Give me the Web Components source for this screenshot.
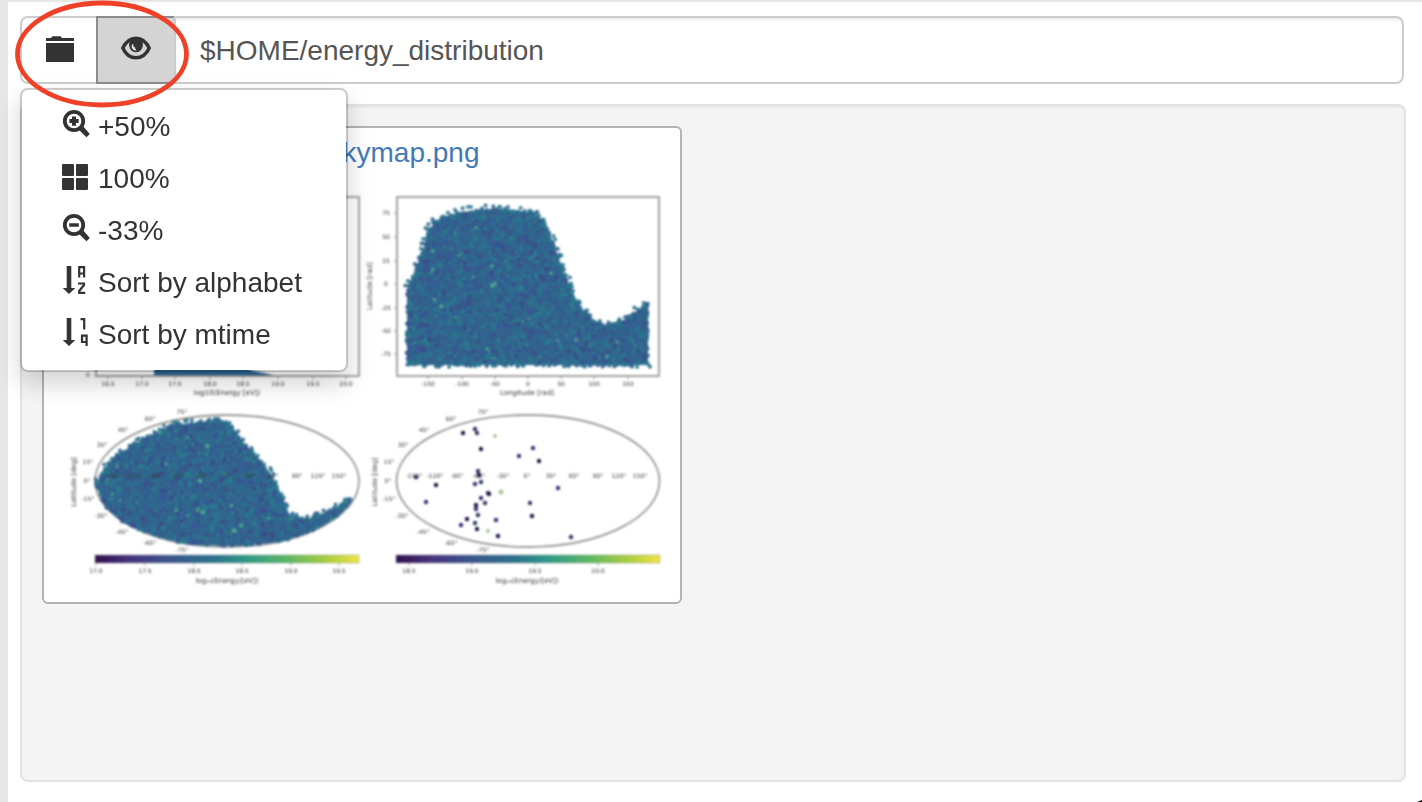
<!DOCTYPE html>
<html lang="en">
<head>
<meta charset="utf-8">
<title>File browser</title>
<style>
  body { margin: 0; font: 28px/40px "Liberation Sans", Arial, sans-serif; color: #333; }
</style>
</head>
<body>
<browser-app>
  <path-bar slot="bar" value="$HOME/energy_distribution">
    <tool-button slot="tools" label="Open folder" icon="folder"></tool-button>
    <tool-button slot="tools" label="View options" icon="eye" active></tool-button>
    <view-menu slot="menu">
      <menu-entry icon="zoomin">+50%</menu-entry>
      <menu-entry icon="grid">100%</menu-entry>
      <menu-entry icon="zoomout">-33%</menu-entry>
      <menu-entry icon="alpha">Sort by alphabet</menu-entry>
      <menu-entry icon="order">Sort by mtime</menu-entry>
    </view-menu>
    <focus-ring slot="mark"></focus-ring>
  </path-bar>
  <preview-card name="event_skymap.png"><sky-figure></sky-figure></preview-card>
</browser-app>

<script>
const ICONS = {
  folder: '<path d="M0 4h5l1.500-1.700h8l1.500 1.700h12v3H0zM0 9h28v19H0z"/>',
  eye: '<path d="M.8 14C3.500 8.500 7.500 4.200 14 4.200S24.500 8.500 27.200 14C24.500 20 20.500 23.800 14 23.800S3.500 20 .8 14z" fill="none" stroke="currentColor" stroke-width="3.400"/><path d="M8 6.500C5.600 12.500 8.500 18.200 14 18.200S22.400 12.500 20 6.500L17 4h-6z"/><path d="M11 10c-2.600 3 0 6.600 3.200 6.200-1.200-1-1.400-1.700-1.200-2.600C11.300 13.400 11 12 11 10z" fill="#e4e4e4" stroke="#e4e4e4" stroke-width=".6"/>',
  zoomin: '<circle cx="12" cy="11" r="9.200" fill="none" stroke="currentColor" stroke-width="3.800"/><path d="M16.500 19.500l4-4 7.300 8.400-3.300 3.300zM10 6.500h4v2.600h2.600v4H14v2.600h-4v-2.600H7.400v-4H10z"/>',
  zoomout: '<circle cx="12" cy="11" r="9.200" fill="none" stroke="currentColor" stroke-width="3.800"/><path d="M16.500 19.500l4-4 7.300 8.400-3.300 3.300zM7.200 9.200h9.600v3.600H7.200z"/>',
  grid: '<rect y="2" width="12" height="12" rx="1"/><rect x="14" y="2" width="12" height="12" rx="1"/><rect y="16" width="12" height="12" rx="1"/><rect x="14" y="16" width="12" height="12" rx="1"/>',
  alpha: '<path d="M4.700 0h4.600v22h4L7 28 .7 22h4z"/><path d="M17.200 11.500V1.200h4.900v10.300M17.200 7.500h5M16 17.500h6v1.500l-4.800 6v1.800h6" fill="none" stroke="currentColor" stroke-width="2.200"/>',
  order: '<path d="M4.700 0h4.600v22h4L7 28 .7 22h4z"/><path d="M18.500 1.200h3.700v10.300M24.600 28V17.700H20v6.300h4.600" fill="none" stroke="currentColor" stroke-width="2.200"/>'
};
const icon = n => `<svg class="icon" viewBox="0 0 28 28" width="28" height="28" fill="currentColor" overflow="visible" aria-hidden="true">${ICONS[n]}</svg>`;

function define(name, render) {
  customElements.define(name, class extends HTMLElement {
    constructor() { super(); this.attachShadow({ mode: 'open' }); }
    connectedCallback() { this.shadowRoot.innerHTML = render(this); }
  });
}

define('browser-app', () => `
<style>
  :host { display: flex; flex-direction: column; gap: 20px; box-sizing: border-box; min-height: 100vh;
    padding: 14px 16px 20px 12px; border: solid #e7e7e7; border-width: 2px 0 0 8px; background: #fff; position: relative; }
  main { flex: 1; box-sizing: border-box; display: flex; flex-wrap: wrap; align-items: flex-start; gap: 20px;
    padding: 20px; border: 2px solid #e3e3e3; border-radius: 8px; background: #f4f4f4; box-shadow: inset 0 2px 2px rgba(0,0,0,.05); }
  .grip { position: absolute; right: 0; bottom: 0; }
</style>
<slot name="bar"></slot>
<main><slot></slot></main>
<svg class="grip" width="5" height="2" aria-hidden="true"><path d="M0 2L5 0V2z" fill="#000"/></svg>`);

define('path-bar', el => `
<style>
  :host { display: block; position: relative; z-index: 1; margin-right: 2px; }
  .group { display: flex; height: 68px; }
  input { flex: 1; min-width: 0; box-sizing: border-box; margin: 0 0 0 -2px; padding: 2px 24px 0; border: 2px solid #ccc;
    border-radius: 0 8px 8px 0; font: inherit; color: #555; background: #fff; position: relative; z-index: 1;
    box-shadow: inset 0 2px 2px rgba(0,0,0,.075); outline: 0; }
  .menu { position: absolute; top: 100%; left: 0; margin-top: 4px; z-index: 2; }
</style>
<div class="group"><slot name="tools"></slot><input type="text" aria-label="Path" value="${el.getAttribute('value')}"></div>
<div class="menu"><slot name="menu"></slot></div>
<slot name="mark"></slot>`);

define('tool-button', el => `
<style>
  :host { display: block; width: 80px; }
  :host([active]) { margin-left: -4px; position: relative; }
  button { display: flex; align-items: center; justify-content: center; width: 100%; height: 100%; box-sizing: border-box;
    margin: 0; padding: 0 0 4px; border: 2px solid #ccc; border-radius: 8px 0 0 8px; background: #fff; color: #333; }
  :host([active]) button { border-color: #8c8c8c; border-radius: 0; background: #d4d4d4; }
</style>
<button type="button" aria-label="${el.getAttribute('label')}">${icon(el.getAttribute('icon'))}</button>`);

define('view-menu', () => `
<style>
  :host { display: block; box-sizing: border-box; min-width: 328px; padding: 10px 0; border: 2px solid rgba(0,0,0,.2); border-radius: 8px; background: #fff;
    background-clip: padding-box; box-shadow: 0 12px 24px rgba(0,0,0,.175); }
</style>
<nav aria-label="View options"><slot></slot></nav>`);

define('menu-entry', el => `
<style>
  :host { display: block; }
  a { display: flex; align-items: center; gap: 8px; padding: 7px 40px 5px; color: #333; text-decoration: none; white-space: nowrap; }
  .icon { margin-bottom: 6px; }
</style>
<a href="#">${icon(el.getAttribute('icon'))}<span><slot></slot></span></a>`);

define('focus-ring', () => `
<style>
  :host { position: absolute; left: -6px; top: -17px; z-index: 3; pointer-events: none; display: block; }
  svg { display: block; }
</style>
<svg width="176" height="110" aria-hidden="true"><ellipse cx="88" cy="55" rx="84.500" ry="51" fill="none" stroke="#ee4127" stroke-width="4.800"/></svg>`);

define('preview-card', el => `
<style>
  :host { display: block; box-sizing: border-box; width: 640px; max-width: 100%; padding: 4px; border: 2px solid #b3b3b3;
    border-radius: 6px; background: #fff; text-align: center; }
  a { display: block; padding-top: 2px; line-height: 38px; color: #437ab5; text-decoration: none; }
</style>
<a href="#">${el.getAttribute('name')}</a><slot></slot>`);

/* Four panels: histogram, flat map, and two all-sky projections with colour bars. */
define('sky-figure', () => {
  let seed = 7;
  const rnd = () => (seed = (seed * 16807) % 2147483647) / 2147483647;
  const inside = (x, y, p) => {
    let c = false;
    for (let i = 0, j = p.length - 1; i < p.length; j = i++) {
      const [a, b] = p[i], [d, e] = p[j];
      if ((b > y) !== (e > y) && x < (d - a) * (y - b) / (e - b) + a) c = !c;
    }
    return c;
  };
  const tones = ['#31688e', '#2c6e8e', '#3a548c', '#355f8d', '#2a788e', '#3c4a8a', '#30648d', '#2b7c8e', '#34618d', '#2f6b8e', '#38589a'];
  const cloud = (p, n) => {
    const xs = p.map(q => q[0]), ys = p.map(q => q[1]);
    const x0 = Math.min(...xs), x1 = Math.max(...xs), y0 = Math.min(...ys), y1 = Math.max(...ys);
    let s = `<polygon points="${p.join(' ')}" fill="#31648d"/>`;
    for (let i = 0; i < n; i++) {
      const x = x0 + rnd() * (x1 - x0), y = y0 + rnd() * (y1 - y0);
      if (!inside(x, y, p)) continue;
      const t = rnd() < .012 ? '#4fa990' : tones[Math.floor(rnd() * tones.length)];
      s += `<circle cx="${x.toFixed(1)}" cy="${y.toFixed(1)}" r="${(1.4 + rnd()).toFixed(1)}" fill="${t}"/>`;
    }
    return s;
  };
  const fringe = (p, from, to, rough = 6) => {
    let s = '';
    for (let i = from; i < to; i++) {
      const [a, b] = p[i], [c, d] = p[i + 1], n = Math.ceil(Math.hypot(c - a, d - b) / 3);
      for (let k = 0; k < n; k++)
        s += `<circle cx="${(a + (c - a) * k / n + rnd() * 5 - 2.5).toFixed(1)}" cy="${(b + (d - b) * k / n + rnd() * rough - rough * .6).toFixed(1)}" r="1.900" fill="${rnd() < .5 ? '#2a788e' : '#31688e'}"/>`;
    }
    return s;
  };
  const flat = [[407,364],[407,290],[415,270],[425,245],[428,230],[440,218],[460,212],[493,209],[533,213],[545,222],[552,240],[560,262],[570,287],[580,307],[593,320],[605,325],[627,319],[648,302],[648,365],[407,365]];
  const sky = [[96,485],[103,470],[117,455],[147,437],[173,425],[220,420],[232,426],[243,442],[257,457],[270,473],[280,493],[290,516],[307,519],[330,511],[353,498],[342,513],[323,526],[303,535],[280,542],[240,546],[190,545],[157,537],[123,523],[105,507]];
  const t = (x, y, s, extra = '') => `<text x="${x}" y="${y + 2}" ${extra}>${s}</text>`;
  const turned = (x, y, s) => `<text transform="translate(${x + 2} ${y}) rotate(-90)" style="font-size:7px">${s}</text>`;
  const row = (xs, y, ls) => xs.map((x, i) => t(x, y, ls[i])).join('');
  const lat = ['75°','60°','45°','30°','15°','0°','-15°','-30°','-45°','-60°','-75°'];
  const latPos = [[182,412],[150,419],[123,430],[102,445],[88,462],[87,481],[88,499],[101,516],[122,532],[150,543],[182,550]];
  const lon = ['-150°','-120°','-90°','-60°','-30°','0°','30°','60°','90°','120°','150°'];
  const lonX = [414,435,457,479,503,527,551,574,598,619,640];
  const pts = [[463,433],[475,429],[477,433],[481,449],[533,448],[519,456],[539,461],[416,477],[478,471],[479,475],[475,484],[481,482],[436,485],[426,502],[488,493],[489,494],[481,498],[485,503],[476,505],[476,509],[478,515],[467,519],[461,525],[475,523],[477,529],[496,520],[530,503],[532,516],[558,488],[571,537],[498,536]];
  const ticks = (xs, y) => xs.map(x => `M${x} ${y}v3`).join('');
  const tx = [108,142,175,210,243,278,313,346], rx = [428,462,495,528,561,594,628], ry = [213,237,261,284,308,331,354];
  const c1 = [96,145,194,242,291,339], c2 = [409,472,535,598];
  return `
<style>
  :host { display: block; }
  svg { display: block; width: 100%; height: auto; }
  text { font: 6px "DejaVu Sans", sans-serif; text-anchor: middle; fill: #333; }
</style>
<svg viewBox="48 172 628 426" role="img" aria-label="Energy histogram and sky maps">
  <defs>
    <linearGradient id="v"><stop offset="0" stop-color="#30104a"/><stop offset=".13" stop-color="#46307e"/><stop offset=".27" stop-color="#3a528b"/><stop offset=".45" stop-color="#2c728e"/><stop offset=".58" stop-color="#2f9a85"/><stop offset=".73" stop-color="#5bb865"/><stop offset=".87" stop-color="#a6cc40"/><stop offset="1" stop-color="#f0e442"/></linearGradient>
    <filter id="s" x="-5%" y="-5%" width="110%" height="110%" color-interpolation-filters="sRGB"><feGaussianBlur stdDeviation=".8"/></filter>
    <filter id="b" x="-5%" y="-5%" width="110%" height="110%" color-interpolation-filters="sRGB"><feGaussianBlur stdDeviation="1"/></filter>
  </defs>
  <g filter="url(#s)">
    <path d="M154 376V330L170 250 190 220 210 280 230 350 250 370 278 376z" fill="#2a6496"/>
    <g fill="none" stroke="#999" stroke-width="1.800">
      <rect x="96" y="197" width="263" height="179"/><rect x="397" y="197" width="262" height="179"/>
      <path stroke-width="1.200" d="${ticks(tx, 376)}${ticks(rx, 376)}${ry.map(y => `M394 ${y}h3`).join('')}"/>
      <ellipse cx="227" cy="481" rx="132" ry="66"/><ellipse cx="528" cy="481" rx="131.500" ry="66"/>
    </g>
    ${cloud(flat, 6500)}${fringe(flat, 1, 17, 8)}${fringe(flat, 18, 19, 5)}
    ${cloud(sky, 4500)}${fringe(sky, 0, 14)}
    <g>${pts.map(([x, y], i) => `<circle cx="${x}" cy="${y}" r="2.200" fill="${['#1d1540', '#382c70', '#2c3a60'][i % 3]}"/>`).join('')}</g>
    <g fill="#a9c79b"><circle cx="495" cy="436" r="2"/><circle cx="501" cy="492" r="2.500"/><circle cx="488" cy="531" r="2"/></g>
    <g fill="url(#v)" stroke="#999" stroke-width=".5"><rect x="95" y="555" width="264" height="8"/><rect x="396" y="555" width="264" height="8"/></g>
    <path d="${ticks(c1, 563)}${ticks(c2, 563)}" stroke="#aaa"/>
  </g>
  <g filter="url(#b)">
    ${t(88, 375, '0')}
    ${row(tx, 384, ['16.5','17.0','17.5','18.0','18.5','19.0','19.5','20.0'])}
    ${row(rx, 384, ['-150','-100','-50','0','50','100','150'])}
    ${ry.map((y, i) => t(386, y, ['75','50','25','0','-25','-50','-75'][i])).join('')}
    ${t(227, 393, 'log10(Energy [eV])', 'style="font-size:7px"')}${t(527, 393, 'Longitude [rad]', 'style="font-size:7px"')}
    ${turned(370, 286, 'Latitude [rad]')}${turned(74, 482, 'Latitude [deg]')}${turned(375, 482, 'Latitude [deg]')}
    ${latPos.map(([x, y], i) => t(x, y, lat[i]) + t(x + 301, y, lat[i])).join('')}
    ${row(lonX, 476, lon)}${row(lonX.map(x => x - 301), 476, lon)}
    ${row(c1, 571, ['17.0','17.5','18.0','18.5','19.0','19.5'])}${row(c2, 571, ['18.5','19.0','19.5','20.0'])}
    ${t(227, 581, 'log₁₀(Energy/[eV])', 'style="font-size:7px"')}${t(527, 581, 'log₁₀(Energy/[eV])', 'style="font-size:7px"')}
  </g>
</svg>`;
});
</script>
</body>
</html>
